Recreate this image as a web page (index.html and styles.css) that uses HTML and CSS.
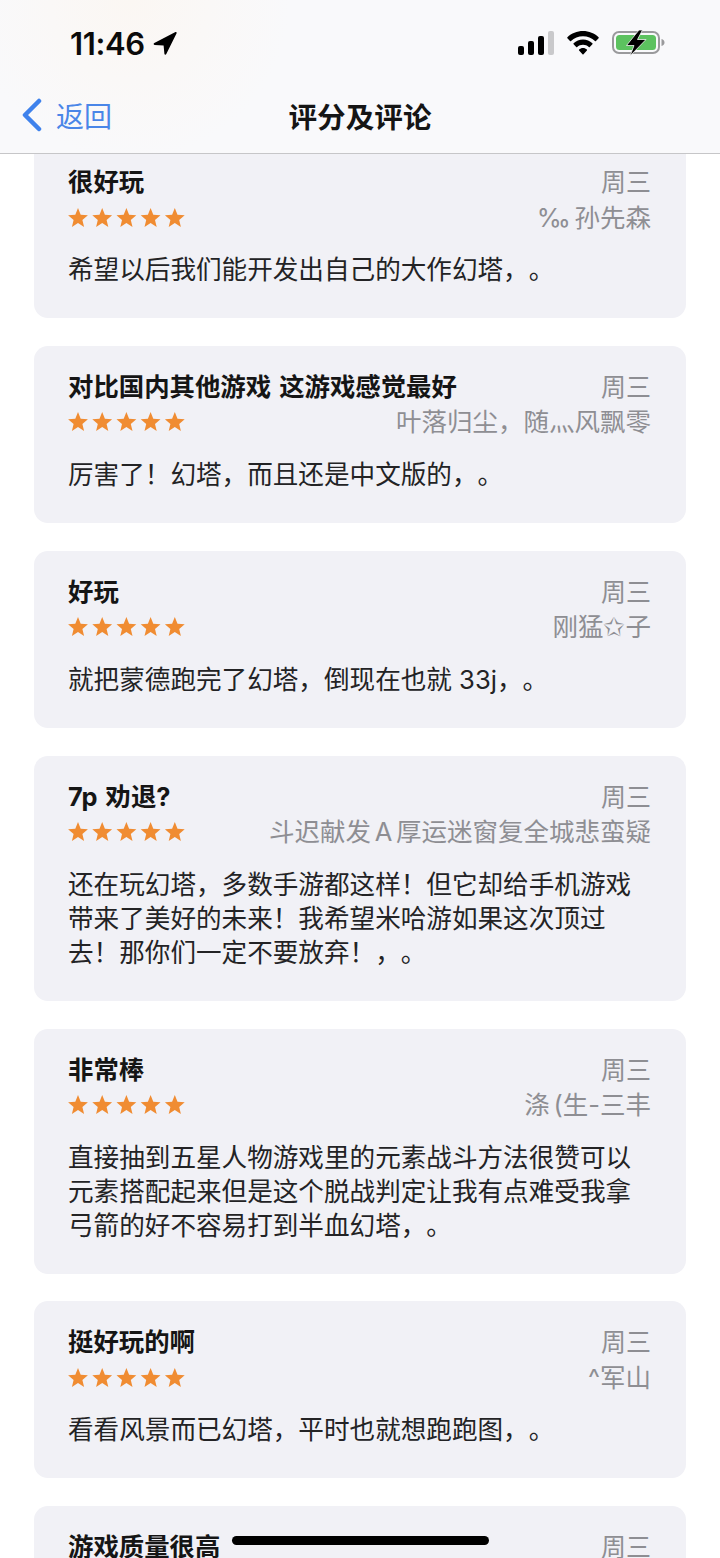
FILE: index.html
```html
<!DOCTYPE html>
<html lang="zh-CN">
<head>
  <meta charset="UTF-8">
  <meta name="viewport" content="width=device-width, initial-scale=1.0">
  <title>评分及评论</title>
  <link rel="stylesheet" href="styles.css">
</head>
<body>
  <svg class="defs" width="0" height="0">
    <symbol id="five-stars" viewBox="0 0 117 20">
      <path id="s" d="M10 .1L12.700 6.800 19.900 7.300 14.400 11.900 16.100 18.900 10 15.100 3.900 18.900 5.600 11.900 .1 7.300 7.300 6.800z"/>
      <use href="#s" x="24.200"/>
      <use href="#s" x="48.400"/>
      <use href="#s" x="72.600"/>
      <use href="#s" x="96.800"/>
    </symbol>
  </svg>

  <header class="top-bar">
    <div class="status-bar">
      <div class="status-left">
        <span class="time">11:46</span>
        <svg class="icon-location" viewBox="0 0 24 23"><path d="M23.600 1.300L13.300 22c-.5 1-1.800.8-1.900-.3l-.8-8.300-9-.5C.5 12.800.2 11.600 1.300 11.100L22 .3c1.100-.5 2 0 1.600 1z"/></svg>
      </div>
      <div class="status-right">
        <svg class="icon-signal" viewBox="0 0 36 24">
          <rect x="0" y="15" width="6" height="9" rx="2"/>
          <rect x="10" y="10" width="6" height="14" rx="2"/>
          <rect x="20" y="5" width="6" height="19" rx="2"/>
          <rect x="30" y="0" width="6" height="24" rx="2" fill="#c9c9cb"/>
        </svg>
        <svg class="icon-wifi" viewBox="0 0 32 24">
          <path d="M16 0c6 0 11.500 2.300 15.600 6.200.3.300.3.700 0 1L29 10c-.3.300-.7.300-1 0-3.200-3-7.400-4.800-12-4.800S7.200 7 4 10c-.3.300-.7.300-1 0L.4 7.200c-.3-.3-.3-.7 0-1C4.500 2.300 10 0 16 0z"/>
          <path d="M16 8.500c3.600 0 6.900 1.400 9.400 3.700.3.300.3.700 0 1l-2.600 2.800c-.3.300-.7.300-1 0-1.500-1.400-3.600-2.200-5.800-2.200s-4.300.8-5.800 2.200c-.3.300-.7.300-1 0l-2.600-2.800c-.3-.3-.3-.7 0-1C9.100 9.900 12.400 8.500 16 8.500z"/>
          <path d="M16 17c1.500 0 2.900.6 3.900 1.500.3.300.3.700 0 1l-3.400 3.800c-.3.300-.7.300-1 0l-3.400-3.800c-.3-.3-.3-.7 0-1 1-.9 2.400-1.500 3.900-1.500z"/>
        </svg>
        <svg class="icon-battery" viewBox="0 0 53 26">
          <rect x="1" y="2" width="46" height="21" rx="6" fill="none" stroke="#9a9a9c" stroke-width="2"/>
          <rect x="4" y="5" width="40" height="15" rx="3.500" fill="#5cc25f"/>
          <path d="M49.500 9c1.800.5 3 1.800 3 3.500s-1.200 3-3 3.500z" fill="#9a9a9c"/>
          <path d="M27 0L14.500 15.500h7.500L18 26 34 9.500h-8.500L30.500 0z" stroke="#f4f4f4" stroke-width=".8"/>
        </svg>
      </div>
    </div>
    <nav class="nav-bar">
      <a class="back">
        <svg class="icon-back" viewBox="0 0 20 34"><path d="M17 3L3 17l14 14"/></svg>
        <span>返回</span>
      </a>
      <h1>评分及评论</h1>
      <span></span>
    </nav>
  </header>

  <main class="review-list">
    <article class="review-card">
      <div class="review-head"><h2>很好玩</h2><span class="meta">周三</span></div>
      <div class="review-sub"><svg class="stars"><use href="#five-stars"/></svg><span class="meta author">‰ 孙先森</span></div>
      <p>希望以后我们能开发出自己的大作幻塔，。</p>
    </article>
    <article class="review-card">
      <div class="review-head"><h2>对比国内其他游戏 这游戏感觉最好</h2><span class="meta">周三</span></div>
      <div class="review-sub"><svg class="stars"><use href="#five-stars"/></svg><span class="meta author">叶落归尘，随灬风飘零</span></div>
      <p>厉害了！幻塔，而且还是中文版的，。</p>
    </article>
    <article class="review-card">
      <div class="review-head"><h2>好玩</h2><span class="meta">周三</span></div>
      <div class="review-sub"><svg class="stars"><use href="#five-stars"/></svg><span class="meta author">刚猛✩子</span></div>
      <p>就把蒙德跑完了幻塔，倒现在也就 33j，。</p>
    </article>
    <article class="review-card">
      <div class="review-head"><h2>7p 劝退?</h2><span class="meta">周三</span></div>
      <div class="review-sub"><svg class="stars"><use href="#five-stars"/></svg><span class="meta author">斗迟献发 A 厚运迷窗复全城悲蛮疑</span></div>
      <p>还在玩幻塔，多数手游都这样！但它却给手机游戏<br>带来了美好的未来！我希望米哈游如果这次顶过<br>去！那你们一定不要放弃！，。</p>
    </article>
    <article class="review-card">
      <div class="review-head"><h2>非常棒</h2><span class="meta">周三</span></div>
      <div class="review-sub"><svg class="stars"><use href="#five-stars"/></svg><span class="meta author">涤 (生-三丰</span></div>
      <p>直接抽到五星人物游戏里的元素战斗方法很赞可以<br>元素搭配起来但是这个脱战判定让我有点难受我拿<br>弓箭的好不容易打到半血幻塔，。</p>
    </article>
    <article class="review-card">
      <div class="review-head"><h2>挺好玩的啊</h2><span class="meta">周三</span></div>
      <div class="review-sub"><svg class="stars"><use href="#five-stars"/></svg><span class="meta author">^军山</span></div>
      <p>看看风景而已幻塔，平时也就想跑跑图，。</p>
    </article>
    <article class="review-card">
      <div class="review-head"><h2>游戏质量很高</h2><span class="meta">周三</span></div>
    </article>
  </main>

  <div class="home-indicator"></div>
</body>
</html>
```

FILE: styles.css
```css
html, body {
  height: 100%;
}
body {
  margin: 0;
  background-color: white;
  font-family: 'Inter', 'Noto Sans CJK SC', sans-serif;
  text-spacing-trim: space-all;
  color: #1c1c1e;
  overflow: hidden;
  position: relative;
}
.defs {
  position: absolute;
}

/* 顶部栏 */
.top-bar {
  position: relative;
  z-index: 2;
  height: 153px;
  border-bottom: 1px solid #c6c6c8;
  background: radial-gradient(circle at 130px 0, #fbf7f3, rgba(249, 249, 251, 0) 160px), #f9f9fb;
}
.status-bar {
  height: 88px;
  box-sizing: border-box;
  padding: 0 55px 2px 70px;
  display: flex;
  justify-content: space-between;
  align-items: center;
}
.status-left, .status-right {
  display: flex;
  align-items: center;
}
.time {
  font-size: 31px;
  font-weight: 600;
  letter-spacing: -0.4px;
  color: #0b0b0b;
}
.icon-location {
  width: 24px;
  height: 23px;
  margin-left: 8px;
}
.icon-signal {
  width: 36px;
  height: 24px;
}
.icon-wifi {
  width: 32px;
  height: 24px;
  margin-left: 13px;
}
.icon-battery {
  width: 53px;
  height: 26px;
  margin-left: 13px;
}
.nav-bar {
  height: 65px;
  display: grid;
  grid-template-columns: 1fr auto 1fr;
  align-items: center;
  padding-bottom: 11px;
  box-sizing: border-box;
}
.back {
  display: flex;
  align-items: center;
  padding-left: 22px;
  font-size: 28px;
  color: #4a86e8;
}
.back span {
  margin-left: 14px;
}
.icon-back {
  width: 20px;
  height: 34px;
  fill: none;
  stroke: #3f82ec;
  stroke-width: 4.500;
  stroke-linecap: round;
  stroke-linejoin: round;
}
h1 {
  margin: 0;
  font-size: 28.600px;
  font-weight: 700;
  color: #151515;
}

/* 评论列表 */
.review-list {
  margin: -13px 34px 0;
  display: flex;
  flex-direction: column;
  gap: 27.880px;
}
.review-card {
  flex-shrink: 0;
  background-color: #f1f1f6;
  border-radius: 14px;
  padding: 24px 35px 31px 34px;
}
.review-head, .review-sub {
  display: flex;
  justify-content: space-between;
  align-items: center;
}
.review-head {
  height: 34px;
}
.review-sub {
  height: 37px;
  margin-bottom: 17px;
}
h2 {
  margin: 0;
  font-size: 25.400px;
  font-weight: 700;
  line-height: 34px;
  word-spacing: 2px;
  color: #151515;
}
.meta {
  font-size: 25px;
  line-height: 34px;
  color: #8e8e93;
  white-space: nowrap;
}
.author {
  font-size: 25.500px;
  word-spacing: -3.500px;
}
.stars {
  width: 117px;
  height: 20px;
  fill: #f08c32;
}
.review-card p {
  margin: 0;
  font-size: 25.600px;
  line-height: 34px;
  color: #232325;
  white-space: nowrap;
}

.home-indicator {
  position: absolute;
  left: 232px;
  top: 1536px;
  width: 257px;
  height: 9px;
  border-radius: 5px;
  background-color: black;
}
```
